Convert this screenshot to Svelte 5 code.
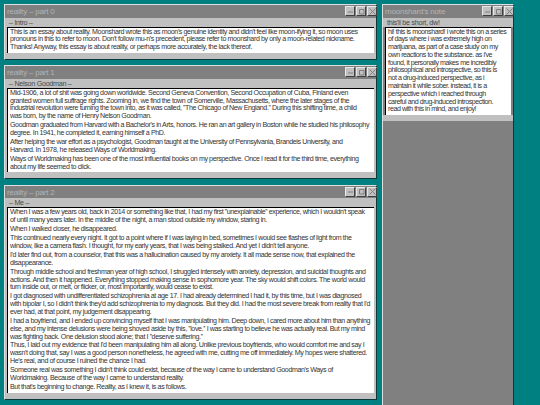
<script>
  const windows = [
    { title: 'reality – part 0', sub: '– Intro –', paras: [
      "This is an essay about reality. Moonshard wrote this as moon's genuine identity and didn't feel like moon-ifying it, so moon uses\npronouns in this to refer to moon. Don't follow mu-n's precedent, please refer to moonshard by only a moon-related nickname.\nThanks! Anyway, this essay is about reality, or perhaps more accurately, the lack thereof."
    ]},
    { title: 'reality – part 1', sub: '– Nelson Goodman –', paras: [
      "Mid-1906, a lot of shit was going down worldwide. Second Geneva Convention, Second Occupation of Cuba, Finland even\ngranted women full suffrage rights. Zooming in, we find the town of Somerville, Massachusetts, where the later stages of the\nindustrial revolution were turning the town into, as it was called, ''The Chicago of New England.'' During this shifting time, a child\nwas born, by the name of Henry Nelson Goodman.",
      "Goodman graduated from Harvard with a Bachelor's in Arts, honors. He ran an art gallery in Boston while he studied his philosophy\ndegree. In 1941, he completed it, earning himself a PhD.",
      "After helping the war effort as a psychologist, Goodman taught at the University of Pennsylvania, Brandeis University, and\nHarvard. In 1978, he released Ways of Worldmaking.",
      "Ways of Worldmaking has been one of the most influential books on my perspective. Once I read it for the third time, everything\nabout my life seemed to click."
    ]},
    { title: 'reality – part 2', sub: '– Me –', paras: [
      "When I was a few years old, back in 2014 or something like that, I had my first ''unexplainable'' experience, which I wouldn't speak\nof until many years later. In the middle of the night, a man stood outside my window, staring in.",
      "When I walked closer, he disappeared.",
      "This continued nearly every night. It got to a point where if I was laying in bed, sometimes I would see flashes of light from the\nwindow, like a camera flash. I thought, for my early years, that I was being stalked. And yet I didn't tell anyone.",
      "I'd later find out, from a counselor, that this was a hallucination caused by my anxiety. It all made sense now, that explained the\ndisappearance.",
      "Through middle school and freshman year of high school, I struggled intensely with anxiety, depression, and suicidal thoughts and\nactions. And then it happened. Everything stopped making sense in sophomore year. The sky would shift colors. The world would\nturn inside out, or melt, or flicker, or, most importantly, would cease to exist.",
      "I got diagnosed with undifferentiated schizophrenia at age 17. I had already determined I had it, by this time, but I was diagnosed\nwith bipolar I, so I didn't think they'd add schizophrenia to my diagnosis. But they did. I had the most severe break from reality that I'd\never had, at that point, my judgement disappearing.",
      "I had a boyfriend, and I ended up convincing myself that I was manipulating him. Deep down, I cared more about him than anything\nelse, and my intense delusions were being shoved aside by this, ''love.'' I was starting to believe he was actually real. But my mind\nwas fighting back. One delusion stood alone; that I ''deserve suffering.''",
      "Thus, I laid out my evidence that I'd been manipulating him all along. Unlike previous boyfriends, who would comfort me and say I\nwasn't doing that, say I was a good person nonetheless, he agreed with me, cutting me off immediately. My hopes were shattered.\nHe's real, and of course I ruined the chance I had.",
      "Someone real was something I didn't think could exist, because of the way I came to understand Goodman's Ways of\nWorldmaking. Because of the way I came to understand reality.",
      "But that's beginning to change. Reality, as I knew it, is as follows."
    ]}
  ];
  const note = {
    title: "moonshard's note", sub: "this'll be short, dw!", paras: [
      "hi! this is moonshard! i wrote this on a series\nof days where i was extremely high on\nmarijuana, as part of a case study on my\nown reactions to the substance. as i've\nfound, it personally makes me incredibly\nphilosophical and introspective, so this is\nnot a drug-induced perspective, as i\nmaintain it while sober. instead, it is a\nperspective which i reached through\ncareful and drug-induced introspection.\nread with this in mind, and enjoy!"
    ]
  };
</script>

{#snippet win(w, cls)}
  <section class="window {cls}">
    <header class="title">
      <span class="title-text">{w.title}</span>
      <div class="buttons">
        <span class="btn"><svg viewBox="0 0 9 9" width="9" height="9"><path d="M2 5h5" /></svg></span>
        <span class="btn"><svg viewBox="0 0 9 9" width="9" height="9"><path d="M2.5 2.5h4.5v4.5h-4.5z" /></svg></span>
        <span class="btn"><svg viewBox="0 0 9 9" width="9" height="9"><path d="M1.5 1.5l6 6M7.5 1.5l-6 6" /></svg></span>
      </div>
    </header>
    <div class="sub">{w.sub}</div>
    <div class="content">
      {#each w.paras as p}<p>{p}</p>{/each}
    </div>
    <div class="strip"></div>
  </section>
{/snippet}

<div class="desktop">
  <div class="left">
    {@render win(windows[0], 'w0')}
    {@render win(windows[1], 'w1')}
    {@render win(windows[2], 'w2')}
  </div>
  {@render win(note, 'note')}
</div>

<style>
  :global(body) { margin: 0; background: #008080; }
  .desktop {
    width: 540px; height: 405px; overflow: hidden; box-sizing: border-box;
    display: flex; align-items: flex-start; gap: 5px; padding: 4px 0 0 4px;
    font-family: "Liberation Sans", Arial, sans-serif;
  }
  .left { width: 373px; display: flex; flex-direction: column; gap: 5.5px; flex: none; }
  .window {
    background: #c0c0c0; box-sizing: border-box;
    border-top: 1px solid #dfdfdf; border-left: 1px solid #dfdfdf;
    border-right: 1px solid #0a3a3a; border-bottom: 1px solid #0a3a3a;
    display: flex; flex-direction: column;
  }
  .note { width: 132px; height: 420px; background: #808080; flex: none; }
  .title {
    height: 12.5px; background: #808080; display: flex; align-items: center; justify-content: space-between;
    padding-left: 2px; color: #b4b4b4; font-size: 8px; letter-spacing: -0.2px; position: relative; flex: none;
  }
  .buttons { display: flex; gap: 1px; position: absolute; right: -1px; top: 1px; }
  .btn {
    width: 10px; height: 10px; box-sizing: border-box; background: #c0c0c0; display: flex; align-items: center; justify-content: center;
    border-top: 1px solid #e8e8e8; border-left: 1px solid #e8e8e8; border-right: 1px solid #404040; border-bottom: 1px solid #404040;
  }
  .btn svg { fill: none; stroke: #808080; stroke-width: 1; flex: none; }
  .sub {
    background: #c0c0c0; height: 9px; line-height: 9px; font-size: 7.2px; color: #4a4a4a; padding-left: 4px; flex: none; letter-spacing: -0.3px;
  }
  .content {
    background: #fff; border-top: 1px solid #000; border-left: 1px solid #000;
    margin: 0 2px; padding: 1px 1px 1px 2px; color: #333; font-size: 7.1px; line-height: 7.8px; letter-spacing: -0.4px;
  }
  .note .content { letter-spacing: -0.45px; }
  .content p { margin: 0 0 1.2px; white-space: pre; }
  .content p:last-child { margin-bottom: 0; }
  .strip { height: 6px; background: #c0c0c0; flex: none; }
</style>
